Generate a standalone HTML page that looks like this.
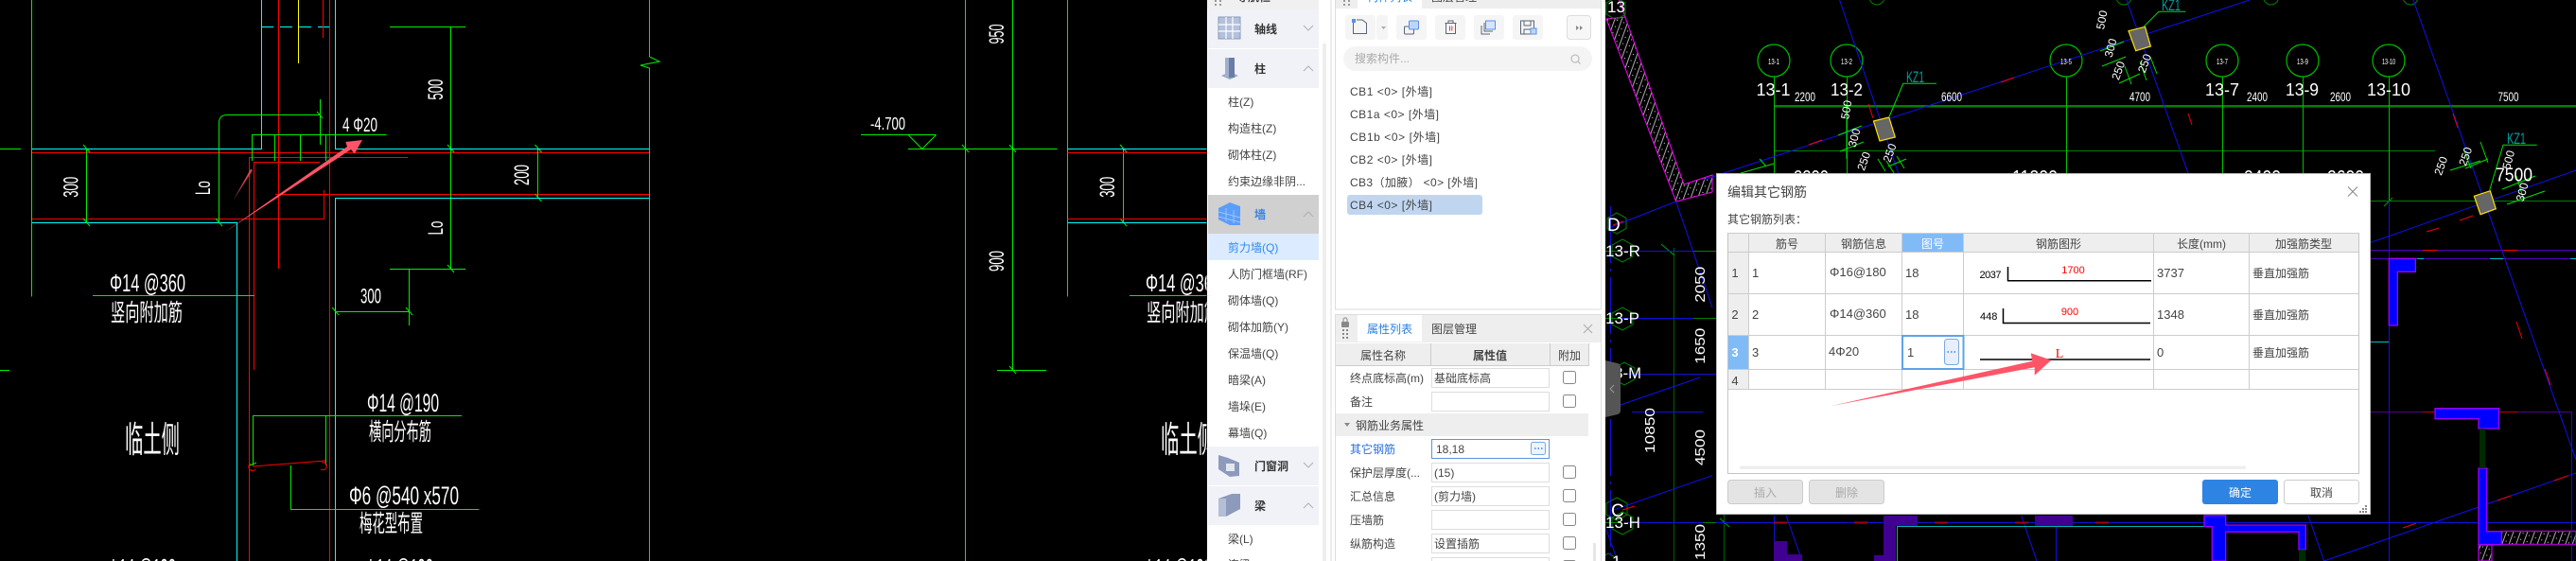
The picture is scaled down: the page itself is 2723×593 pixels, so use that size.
<!DOCTYPE html>
<html lang="zh"><head><meta charset="utf-8"><title>CAD</title>
<style>
html,body{margin:0;padding:0;background:#000;width:2723px;height:593px;overflow:hidden}
svg{display:block;font-family:"Liberation Sans","Noto Sans CJK SC",sans-serif;font-size:12px}
.l{fill:none;stroke-width:1;shape-rendering:crispEdges}
.d{fill:none;stroke-width:1}
.w text,text.w{fill:#fff}
.cj{font-family:"WenQuanYi Zen Hei","Noto Sans CJK SC",sans-serif}
.p text,text.p{fill:#444}
</style></head><body>
<svg width="2723" height="593" viewBox="0 0 2723 593" xmlns="http://www.w3.org/2000/svg">
<defs>
<clipPath id="c1"><rect x="0" y="0" width="1275.5" height="593"/></clipPath>
<clipPath id="c2"><rect x="1697" y="0" width="1026" height="593"/></clipPath>
<pattern id="h" width="7" height="7" patternUnits="userSpaceOnUse" patternTransform="rotate(20)"><rect width="7" height="7" fill="#000"/><path d="M1 0V7" stroke="#aaa" stroke-width="1"/><path d="M4 2V3" stroke="#ddd"/></pattern>
</defs>
<rect width="2723" height="593" fill="#000"/>

<!-- LEFT CAD -->
<path class="l" stroke="#00ffff" d="M276.5 0V157.5H33.5M354.5 0V157.5H686M33.5 235.5H250.5V593M354.5 593V209.5H686"/>
<path class="l" stroke="#00ffff" stroke-dasharray="13 7" d="M276 28.5H354"/>
<path class="l" stroke="#ff0000" d="M33.5 161.5H686M294.5 0V284M348.5 0V593M341.5 0V40M263.5 593V166.5H431M268.5 391V171.5H338M291 205.5H686M342.5 201V231.5H33.5"/>
<path class="l" stroke="#ffff00" d="M315.5 0V67"/>
<path class="l" stroke="#00ee00" d="M33.5 0V313.5M412 28.5H492M476.5 28V284.5M412 284.5H492M338.5 105V153M266.5 142.5H408.5M266.5 142V170M290.5 142V170M317.5 142V170M344.5 142V170M91.5 157V235M568.5 157V209M98 312.5H269M432.5 284V344M354 329.5H432M267 439.5H488M267.5 439V492M344.5 439V492M307.5 492V538.5H506M0 157.5H22M0 391.5H10M231.5 235V130M240 121.5H338"/>
<path class="d" stroke="#00ee00" d="M231.5 130Q231.5 121.5 240 121.5M88 153l7 8M88 231l7 8M228 231l7 8M473 153l7 8M473 280l7 8M565.5 153l7 8M565.5 205l7 8M351 325l7 8M429 325l7 8M335 118l6 7M264 492l7-3"/>
<path class="d" stroke="#ff0000" d="M267 493L344 487M265 490a4 4 0 1 0 5 6M340 489a4 4 0 1 1 -1 7"/>
<g class="w">
<text transform="translate(82.5,197.8) rotate(-90)" text-anchor="middle" font-size="22" textLength="22" lengthAdjust="spacingAndGlyphs">300</text>
<text transform="translate(222,198.6) rotate(-90)" text-anchor="middle" font-size="22" textLength="15" lengthAdjust="spacingAndGlyphs">Lo</text>
<text x="362" y="139" font-size="21" textLength="37" lengthAdjust="spacingAndGlyphs">4 Φ20</text>
<text transform="translate(468,94.6) rotate(-90)" text-anchor="middle" font-size="22" textLength="22" lengthAdjust="spacingAndGlyphs">500</text>
<text transform="translate(559,185) rotate(-90)" text-anchor="middle" font-size="22" textLength="22" lengthAdjust="spacingAndGlyphs">200</text>
<text transform="translate(468,241) rotate(-90)" text-anchor="middle" font-size="22" textLength="15" lengthAdjust="spacingAndGlyphs">Lo</text>
<text x="116" y="308" font-size="26" textLength="80" lengthAdjust="spacingAndGlyphs">Φ14 @360</text>
<text class="cj" x="117" y="339" font-size="25" textLength="76" lengthAdjust="spacingAndGlyphs">竖向附加筋</text>
<text x="381" y="320.7" font-size="22" textLength="22" lengthAdjust="spacingAndGlyphs">300</text>
<text x="388" y="435" font-size="27" textLength="76" lengthAdjust="spacingAndGlyphs">Φ14 @190</text>
<text class="cj" x="390" y="465" font-size="25" textLength="66" lengthAdjust="spacingAndGlyphs">横向分布筋</text>
<text class="cj" x="132" y="478" font-size="38" textLength="58" lengthAdjust="spacingAndGlyphs">临土侧</text>
<text x="369" y="533" font-size="27" textLength="116" lengthAdjust="spacingAndGlyphs">Φ6 @540 x570</text>
<text class="cj" x="380" y="562" font-size="25" textLength="67" lengthAdjust="spacingAndGlyphs">梅花型布置</text>
<text x="114" y="609" font-size="26" textLength="72" lengthAdjust="spacingAndGlyphs">Φ14 @190</text>
<text x="386" y="609" font-size="26" textLength="72" lengthAdjust="spacingAndGlyphs">Φ14 @190</text>
</g>

<!-- MIDDLE CAD -->
<path class="l" stroke="#00ee00" d="M686.5 0V60M686.5 72V593M1020.5 0V593M1070.5 0V391.5M1054 391.5H1106M1128.5 0V313.5M960 157.5H1117.5M910 142.5H989.5M1187.5 157V235"/>
<path class="d" stroke="#00ee00" d="M686.5 60L697 65L677 69L686.5 72M960 142.5L974.7 157.5L989.5 142.5M1017 153l7 8M1067 153l7 8M1067 387l7 8M1184 153l7 8M1184 231l7 8"/>
<path class="l" stroke="#00ffff" d="M0 0"/>
<path class="l" stroke="#00ffff" d="M354 157.5H686.5M354 209.5H686.5"/>
<g clip-path="url(#c1)">
<path class="l" stroke="#00ffff" d="M1128.5 157.5H1276M1128.5 235.5H1276"/>
<path class="l" stroke="#ff0000" d="M1128.5 161.5H1276M1128.5 231.5H1276"/>
<path class="l" stroke="#00ee00" d="M1194 312.5H1276"/>
<g class="w">
<text x="1211" y="308" font-size="26" textLength="80" lengthAdjust="spacingAndGlyphs">Φ14 @360</text>
<text class="cj" x="1212" y="339" font-size="25" textLength="76" lengthAdjust="spacingAndGlyphs">竖向附加筋</text>
<text class="cj" x="1227" y="478" font-size="38" textLength="58" lengthAdjust="spacingAndGlyphs">临土侧</text>
<text x="1209" y="609" font-size="26" textLength="72" lengthAdjust="spacingAndGlyphs">Φ14 @190</text>
</g></g>
<g class="w">
<text x="920" y="137" font-size="18" textLength="37" lengthAdjust="spacingAndGlyphs">-4.700</text>
<text transform="translate(1061,36) rotate(-90)" text-anchor="middle" font-size="22" textLength="21" lengthAdjust="spacingAndGlyphs">950</text>
<text transform="translate(1061,276) rotate(-90)" text-anchor="middle" font-size="22" textLength="22" lengthAdjust="spacingAndGlyphs">900</text>
<text transform="translate(1177.8,197.8) rotate(-90)" text-anchor="middle" font-size="22" textLength="22" lengthAdjust="spacingAndGlyphs">300</text>
</g>

<!-- RIGHT CAD -->
<g clip-path="url(#c2)">
<path d="M1698 20L1771.7 213L1810 203V185L1780 195L1718 18Z" fill="url(#h)" stroke="#ff00ff" stroke-width="1"/>
<path d="M1708 -10L1718 18" stroke="#ff00ff" fill="none"/>
<path d="M2644 561.5H2723V575.5H2644ZM2620 576H2634V593H2620Z" fill="url(#h)" stroke="#a000c0" stroke-width="1.5"/>
<!-- green grids -->
<path class="l" stroke="#008000" stroke-width="3" d="M1875 112H2723" style="stroke-width:2.5"/>
<path class="l" stroke="#008000" d="M1875 159.5H2574M2506 212.5H2723"/>
<path class="l" stroke="#00c000" d="M1875.5 81V184M1952.5 81V184M2184.5 81V184M2349.5 81V184M2434.5 81V184M2525.5 81V212"/>
<path class="l" stroke="#006000" d="M1769.5 262V593M1822.5 544V593"/>
<path class="d" stroke="#00a000" d="M1756 258l14 12M1818 548l10 9M2520 218l9-9"/>
<g fill="none" stroke="#00c000" stroke-width="1.2">
<circle cx="1875" cy="64" r="17"/><circle cx="1952" cy="64" r="17"/><circle cx="2184" cy="64" r="17"/><circle cx="2349" cy="64" r="17"/><circle cx="2434" cy="64" r="17"/><circle cx="2525" cy="64" r="17"/>
</g>
<g fill="none" stroke="#008000" stroke-width="1">
<circle cx="1984" cy="-3" r="8"/><circle cx="2245" cy="-3" r="8"/><circle cx="2400.6" cy="-3" r="8"/><circle cx="2548" cy="-3" r="8"/>
<path d="M1708 -3l10 6v12l-10 6l-10-6v-12zM1709 225l10 5.5v11l-10 5.5l-10-5.5v-11zM1715 253l11 6v12l-11 6l-11-6v-12zM1715 325l11 6v12l-11 6l-11-6v-12zM1717 383l11 6v12l-11 6l-11-6v-12zM1709 526l11 6v12l-11 6l-11-6v-12zM1715 541l11 6v12l-11 6l-11-6v-12zM1700 585l10 6v12l-10 6l-10-6v-12z"/>
</g>
<!-- blue lines -->
<g fill="none" stroke="#1010f0" stroke-width="1">
<path d="M1801 190L2378 0M1944.6 0L2006.6 183M2248 0L2313 183M2551 0L2723 486M2505 256.7L2723 180M1703 240L1771.7 213M1713 428L1797 399M1703 540L1810 502.7M2456.7 593L2723 500M2440 545L2456.7 593M1698 560L1710 593M1771.7 213L1810 325M1888 545L1905 593M2136.7 545L2153 593"/>
</g>
<g fill="none" stroke="#f00010" stroke-width="1">
<path d="M1912 153l14-5M2115 87l14-5M1975 110l5 15M2313 120l4 12M2593 120l5 15M2660 340l6 18M2690 390l6 17M2565 245l13-4M2600 233l14-5M2540 558l14-5M2640 529l14-5M2700 508l14-5M1705 238l11-4M1715 539l13-4"/>
</g>
<path class="l" stroke="#1010e0" d="M1713 265.5H1800M1713 336.5H1814M1720 395.5H1814M1725 435.5H1800M1720 552.5H1814M1814 552.5H2723M2173.5 545V593M1875.5 545V593M2525.5 212V593M2718.5 435V593"/>
<path class="l" stroke="#1010e0" stroke-dasharray="60 6 3 6" d="M1702.5 218V593"/>
<path class="l" stroke="#008000" d="M1697 265.5H1712M1790 265.5H1814M1697 336.5H1712M1790 336.5H1814M1697 552.5H1712M1800 552.5H1814"/>
<path class="l" stroke="#a00020" stroke-width="2" stroke-dasharray="14 71" d="M1875 552.5H2300" style="stroke-width:2"/>
<path class="l" stroke="#5000c0" d="M2506 264.5H2723M2506 273.5H2723"/>
<path class="l" stroke="#00c0c0" d="M2555 273.5H2562M2632 273.5H2646M2717 273.5H2723M2506 361.5H2525"/>
<path class="l" stroke="#ff0000" d="M2561 264.5H2576M2646 264.5H2661"/>
<path class="l" stroke="#500090" d="M2506 435.5H2574M2641 435.5H2718"/>
<path class="l" stroke="#c00000" d="M2561 435.5H2574M2641 435.5H2661"/>
<!-- purple blocks -->
<path fill="#400090" d="M1991 545H2027V556H2004V593H1981V586.7H1991ZM2151 545H2191V556H2151ZM1875 572H1889V586H1905V593H1875Z"/>
<path class="l" stroke="#00b0b0" d="M2005.5 593V556.5H2330"/>
<!-- blue shapes -->
<g fill="#0000ff" stroke="#a000ff" stroke-width="1.3">
<path d="M2525.3 273.3H2553.3V287.3H2534.3V344H2525.3Z"/>
<path d="M2574 431.7H2641.3V453H2620V442.7H2574Z"/>
<path d="M2620 495H2628.7V561.7H2644.3V575.7H2620Z"/>
<path d="M2330 545H2352.7V555H2437.3V581H2430V562.3H2352.7V593H2338.3V556.7H2330Z"/>
</g>
<rect x="2621" y="453" width="6" height="42" fill="#002a00"/>
<path d="M2430 581H2437V593H2430Z" fill="#002a00"/>
<!-- columns -->
<g fill="#666" stroke="#ffe000" stroke-width="1.2">
<path d="M1980.5 128L1996.8 124L2003.3 145L1987 149Z"/>
<path d="M2250 32.7L2267.5 28.3L2273.4 49L2257.7 53.7Z"/>
<path d="M2615.3 207.3L2632.3 201.7L2638.3 220.7L2622 226.7Z"/>
</g>
<!-- leaders + dim ticks -->
<g fill="none" stroke="#00dd00" stroke-width="1">
<path d="M1996.8 124L2011.8 88.3H2047M2266 28.3L2282 12.3H2310M2631.7 201L2646 153.3H2681.7"/>
<path d="M1943 143L1968 133M1945 160L1970 150M1952 168V110M1985 168L1993 181M1994 170L2002 183M2005 165L2013 178M1996 176L2015 168"/>
<path d="M2220 54L2245 44M2222 70L2247 60M2240 88L2262 78M2246 70L2253 89M2262 65L2269 85M2273 60L2280 78"/>
<path d="M2590 180L2622 170M2604 157L2612 178M2622 150L2630 172M2645 200L2680 186M2650 216L2690 202M2660 186L2668 212M2606 178L2630 168"/>
<path d="M1875 173L1840 183M1860 168l7 8"/>
</g>
<g fill="#fff" font-size="10" text-anchor="middle">
<text x="1875" y="68" font-size="8" textLength="12" lengthAdjust="spacingAndGlyphs">13-1</text>
<text x="1952" y="68" font-size="8" textLength="12" lengthAdjust="spacingAndGlyphs">13-2</text>
<text x="2184" y="68" font-size="8" textLength="12" lengthAdjust="spacingAndGlyphs">13-5</text>
<text x="2349" y="68" font-size="8" textLength="12" lengthAdjust="spacingAndGlyphs">13-7</text>
<text x="2434" y="68" font-size="8" textLength="12" lengthAdjust="spacingAndGlyphs">13-9</text>
<text x="2525" y="68" font-size="8" textLength="14" lengthAdjust="spacingAndGlyphs">13-10</text>
</g>
<g fill="#fff">
<text x="1699" y="13" font-size="17">13</text>
<text x="1704" y="599" font-size="17">1</text>
<text x="1856.5" y="101" font-size="18" textLength="36" lengthAdjust="spacingAndGlyphs">13-1</text>
<text x="1935" y="101" font-size="18" textLength="34" lengthAdjust="spacingAndGlyphs">13-2</text>
<text x="2331" y="101" font-size="18" textLength="36" lengthAdjust="spacingAndGlyphs">13-7</text>
<text x="2416" y="101" font-size="18" textLength="35" lengthAdjust="spacingAndGlyphs">13-9</text>
<text x="2502" y="101" font-size="18" textLength="46" lengthAdjust="spacingAndGlyphs">13-10</text>
<g font-size="14">
<text x="1897" y="107" textLength="22" lengthAdjust="spacingAndGlyphs">2200</text>
<text x="2052" y="107" textLength="22" lengthAdjust="spacingAndGlyphs">6600</text>
<text x="2251" y="107" textLength="22" lengthAdjust="spacingAndGlyphs">4700</text>
<text x="2375" y="107" textLength="22" lengthAdjust="spacingAndGlyphs">2400</text>
<text x="2463" y="107" textLength="22" lengthAdjust="spacingAndGlyphs">2600</text>
<text x="2640.5" y="107" textLength="22" lengthAdjust="spacingAndGlyphs">7500</text>
</g>
<g font-size="20">
<text x="1896" y="194" textLength="37" lengthAdjust="spacingAndGlyphs">2200</text>
<text x="2127" y="194" textLength="48" lengthAdjust="spacingAndGlyphs">11200</text>
<text x="2372" y="194" textLength="39" lengthAdjust="spacingAndGlyphs">2400</text>
<text x="2460" y="194" textLength="39" lengthAdjust="spacingAndGlyphs">2600</text>
</g>
<text x="2638" y="191.7" font-size="20" textLength="39" lengthAdjust="spacingAndGlyphs">7500</text>
<g font-size="12" text-anchor="middle">
<text transform="translate(1955.7,116.7) rotate(-80)">500</text>
<text transform="translate(1964,146.7) rotate(-75)">300</text>
<text transform="translate(1974,171.7) rotate(-70)">250</text>
<text transform="translate(2001.4,163) rotate(-70)">250</text>
<text transform="translate(2225.8,21.7) rotate(-80)">500</text>
<text transform="translate(2235,51.7) rotate(-75)">300</text>
<text transform="translate(2243,76) rotate(-70)">250</text>
<text transform="translate(2270.8,68.3) rotate(-70)">250</text>
<text transform="translate(2584,176.7) rotate(-70)">250</text>
<text transform="translate(2610,166.7) rotate(-70)">250</text>
<text transform="translate(2655.6,170) rotate(-75)">500</text>
<text transform="translate(2670,204) rotate(-75)">300</text>
</g>
<text x="1699" y="244" font-size="19">D</text>
<text x="1703" y="546" font-size="19">C</text>
<text x="1697" y="271" font-size="17" textLength="37" lengthAdjust="spacingAndGlyphs">13-R</text>
<text x="1697" y="342" font-size="17" textLength="36" lengthAdjust="spacingAndGlyphs">13-P</text>
<text x="1697" y="400" font-size="17" textLength="38" lengthAdjust="spacingAndGlyphs">13-M</text>
<text x="1697" y="558" font-size="17" textLength="37" lengthAdjust="spacingAndGlyphs">13-H</text>
<g font-size="15" text-anchor="middle">
<text transform="translate(1802,300.7) rotate(-90)" textLength="38" lengthAdjust="spacingAndGlyphs">2050</text>
<text transform="translate(1802,365.7) rotate(-90)" textLength="38" lengthAdjust="spacingAndGlyphs">1650</text>
<text transform="translate(1802,473) rotate(-90)" textLength="38" lengthAdjust="spacingAndGlyphs">4500</text>
<text transform="translate(1802,573) rotate(-90)" textLength="38" lengthAdjust="spacingAndGlyphs">1350</text>
<text transform="translate(1749,455) rotate(-90)" textLength="48" lengthAdjust="spacingAndGlyphs">10850</text>
</g>
</g>
<g fill="#00a0a0" font-size="17">
<text x="2015" y="87" textLength="19" lengthAdjust="spacingAndGlyphs">KZ1</text>
<text x="2285" y="11" textLength="20" lengthAdjust="spacingAndGlyphs">KZ1</text>
<text x="2650" y="152" textLength="20" lengthAdjust="spacingAndGlyphs">KZ1</text>
</g>
</g>

<!-- PANEL -->
<rect x="1276" y="0" width="421" height="593" fill="#fff"/>
<rect x="1276" y="0" width="118" height="10" fill="#f0f0f0"/>
<rect x="1398" y="46" width="4" height="547" fill="#eee"/>
<rect x="1406.5" y="0" width="1" height="593" fill="#ddd"/>
<rect x="1411.5" y="-2" width="281" height="329" fill="#fff" stroke="#ddd"/>
<rect x="1412" y="0" width="280" height="9" fill="#eee"/>
<rect x="1435" y="0" width="68" height="9" fill="#fff"/>
<text x="1307" y="1" font-weight="bold" fill="#444" font-size="12">导航栏</text>
<text x="1445" y="1" fill="#2b7fe0">构件列表</text>
<text x="1513" y="1" fill="#444">图层管理</text>
<g fill="#999"><rect x="1284" y="0" width="2" height="2"/><rect x="1289" y="0" width="2" height="2"/><rect x="1284" y="4" width="2" height="2"/><rect x="1289" y="4" width="2" height="2"/><rect x="1420" y="0" width="2" height="2"/><rect x="1425" y="0" width="2" height="2"/><rect x="1420" y="4" width="2" height="2"/><rect x="1425" y="4" width="2" height="2"/></g>

<!-- nav -->
<rect x="1277" y="10" width="117" height="41" fill="#f0f2f7"/>
<rect x="1277" y="52" width="117" height="41" fill="#f0f2f7"/>
<rect x="1277" y="206" width="117" height="41" fill="#d0d0d0"/>
<rect x="1277" y="247" width="117" height="28" fill="#dcebff"/>
<rect x="1277" y="472" width="117" height="41" fill="#f0f2f7"/>
<rect x="1277" y="514" width="117" height="41" fill="#f0f2f7"/>
<!-- nav icons -->
<rect x="1288" y="18" width="23" height="23" fill="#b4c0dc" stroke="#8a9aba"/>
<path d="M1296 18V41M1303 18V41M1288 26H1311M1288 33H1311" stroke="#fff" stroke-width="1.2"/>
<path d="M1291 80L1300 84L1309 80L1300 76Z" fill="#9aa6bf"/><rect x="1295" y="61" width="10" height="21" fill="#6a7da6"/><rect x="1295" y="61" width="4" height="21" fill="#9fb0cf"/>
<path d="M1288 220L1300 214L1311 218V238L1300 238L1288 232Z" fill="#5b9dfa"/><path d="M1288 224L1311 230M1288 229L1311 235M1296 220V234M1304 222V236" stroke="#a8ccff" stroke-width=".8"/>
<path d="M1288 481L1298 484L1310 489V503L1300 504L1288 496Z" fill="#8d9abb"/><rect x="1296" y="490" width="9" height="8" fill="#e3e7f0"/>
<path d="M1288 527L1302 522L1311 522V538L1296 546H1288Z" fill="#8d9abb"/><path d="M1288 527H1296V546H1288Z" fill="#b4bed4"/>
<!-- chevrons -->
<g fill="none" stroke="#b0b0b8" stroke-width="1"><path d="M1378 27l5 5l5-5M1378 75l5-5l5 5M1378 229l5-5l5 5M1378 489l5 5l5-5M1378 537l5-5l5 5"/></g>
<g font-weight="bold" fill="#333">
<text x="1326" y="35">轴线</text><text x="1326" y="77">柱</text><text x="1326" y="231" fill="#3b82e0">墙</text><text x="1326" y="497">门窗洞</text><text x="1326" y="539">梁</text>
</g>
<g class="p">
<text x="1298" y="112">柱(Z)</text><text x="1298" y="140">构造柱(Z)</text><text x="1298" y="168">砌体柱(Z)</text><text x="1298" y="196">约束边缘非阴...</text>
<text x="1298" y="266" style="fill:#2b8cf0">剪力墙(Q)</text><text x="1298" y="294">人防门框墙(RF)</text><text x="1298" y="322">砌体墙(Q)</text><text x="1298" y="350">砌体加筋(Y)</text><text x="1298" y="378">保温墙(Q)</text><text x="1298" y="406">暗梁(A)</text><text x="1298" y="434">墙垛(E)</text><text x="1298" y="462">幕墙(Q)</text><text x="1298" y="574">梁(L)</text><text x="1298" y="601">连梁</text>
</g>

<!-- toolbar -->
<g fill="#f5f5f5"><rect x="1422" y="16" width="32" height="26" rx="3"/><rect x="1455" y="16" width="12" height="26" rx="3"/><rect x="1476" y="16" width="32" height="26" rx="3"/><rect x="1517" y="16" width="32" height="26" rx="3"/><rect x="1558" y="16" width="32" height="26" rx="3"/><rect x="1599" y="16" width="32" height="26" rx="3"/></g>
<rect x="1656.5" y="16.5" width="25" height="25" rx="3" fill="#f7f7f7" stroke="#ddd"/>
<path d="M1460 28h5l-2.500 3z" fill="#aaa"/>
<g fill="none" stroke="#5a6578" stroke-width="1">
<path d="M1430.500 24V35.500H1444.500V24.500L1440 21H1434"/>
<rect x="1484.500" y="28" width="10" height="8" rx="1"/>
<path d="M1527.500 24.500H1539.500M1531 24.500V22H1536V24.500M1528.500 24.500V35.500H1538.500V24.500"/>
<path d="M1566 27V36H1575M1569 24V33H1578"/>
<rect x="1607.500" y="22" width="14" height="14"/><path d="M1611 22V27H1618V22M1611 36V31H1618"/>
</g>
<rect x="1429" y="20" width="4" height="4" fill="#5b8fe8"/>
<rect x="1489.500" y="22" width="10" height="9" rx="1" fill="#bcd6f8" stroke="#5b8fe8"/>
<path d="M1532.500 27.500V32.500M1534.800 27.500V32.500" stroke="#e33"/>
<rect x="1570.500" y="22" width="10" height="9" fill="#d5e6fc" stroke="#5b8fe8"/>
<rect x="1618" y="30" width="6" height="6" fill="#bcd6f8" stroke="#5b8fe8"/>
<path d="M1666 27v5l3-2.500zM1670 27v5l3-2.500z" fill="#888"/>
<rect x="1420" y="49" width="263" height="26" rx="13" fill="#f4f4f4"/>
<text x="1432" y="66" fill="#aaa">搜索构件...</text>
<circle cx="1665" cy="62" r="4" fill="none" stroke="#c0c0c0" stroke-width="1.3"/><path d="M1668 65l2.500 2.500" stroke="#c0c0c0" stroke-width="1.3"/>
<rect x="1424" y="206" width="143" height="21" rx="3" fill="#c0d6f0"/>
<g class="p" xml:space="preserve" style="white-space:pre">
<text x="1427" y="101" textLength="87">CB1  &lt;0&gt;  [外墙]</text>
<text x="1427" y="125" textLength="94">CB1a  &lt;0&gt;  [外墙]</text>
<text x="1427" y="149" textLength="95">CB1b  &lt;0&gt;  [外墙]</text>
<text x="1427" y="173" textLength="87">CB2  &lt;0&gt;  [外墙]</text>
<text x="1427" y="197" textLength="135">CB3（加腋） &lt;0&gt;  [外墙]</text>
<text x="1427" y="221" textLength="87">CB4  &lt;0&gt;  [外墙]</text>
</g>

<!-- properties -->
<rect x="1411.500" y="332.500" width="281" height="262" fill="#fff" stroke="#ddd"/>
<rect x="1412" y="333" width="280" height="29" fill="#eee"/>
<rect x="1435" y="333" width="68" height="28" fill="#fff"/>
<text x="1445" y="352" fill="#2b7fe0">属性列表</text>
<text x="1513" y="352" fill="#444">图层管理</text>
<path d="M1674 343l9 9m0-9l-9 9" stroke="#aaa" fill="none"/>
<rect x="1418" y="340" width="8" height="6" fill="#888" rx="1"/><path d="M1420 340v-2a2 2 0 0 1 4 0v2" fill="none" stroke="#888"/>
<g fill="#888"><rect x="1419" y="348" width="2" height="2"/><rect x="1423" y="348" width="2" height="2"/><rect x="1419" y="352" width="2" height="2"/><rect x="1423" y="352" width="2" height="2"/><rect x="1419" y="356" width="2" height="2"/><rect x="1423" y="356" width="2" height="2"/></g>
<rect x="1412" y="363" width="268" height="24" fill="#eee"/>
<path class="l" stroke="#ccc" d="M1512.500 363V387M1638.500 363V387M1679.500 363V387M1412 386.500H1680"/>
<g class="p" text-anchor="middle"><text x="1462" y="380">属性名称</text><text x="1575" y="380" font-weight="bold">属性值</text><text x="1659" y="380">附加</text></g>
<rect x="1412" y="437" width="267" height="24" fill="#eee"/>
<path d="M1421 447h6l-3 4z" fill="#888"/>
<g fill="#fff" stroke="#ddd"><rect x="1513.500" y="389.500" width="124" height="20"/><rect x="1513.500" y="414.500" width="124" height="20"/><rect x="1513.500" y="489.500" width="124" height="20"/><rect x="1513.500" y="514.500" width="124" height="20"/><rect x="1513.500" y="539.500" width="124" height="20"/><rect x="1513.500" y="564.500" width="124" height="20"/><rect x="1513.500" y="589.500" width="124" height="20"/></g>
<rect x="1513.500" y="464.500" width="124" height="20" fill="#fff" stroke="#5c93e0"/>
<rect x="1618.500" y="467.500" width="15" height="13" rx="2" fill="#eef4fc" stroke="#7aa8e0"/>
<path d="M1622 474h1.500M1625.500 474h1.500M1629 474h1.500" stroke="#3b82e0" stroke-width="1.500"/>
<g fill="#fff" stroke="#888"><rect x="1652.500" y="392.500" width="13" height="13" rx="2"/><rect x="1652.500" y="417.500" width="13" height="13" rx="2"/><rect x="1652.500" y="492.500" width="13" height="13" rx="2"/><rect x="1652.500" y="517.500" width="13" height="13" rx="2"/><rect x="1652.500" y="542.500" width="13" height="13" rx="2"/><rect x="1652.500" y="567.500" width="13" height="13" rx="2"/><rect x="1652.500" y="592.500" width="13" height="13" rx="2"/></g>
<g class="p">
<text x="1427" y="404">终点底标高(m)</text><text x="1516" y="404">基础底标高</text>
<text x="1427" y="429">备注</text>
<text x="1433" y="454">钢筋业务属性</text>
<text x="1427" y="479" style="fill:#2b6fe0">其它钢筋</text><text x="1518" y="479">18,18</text>
<text x="1427" y="504">保护层厚度(...</text><text x="1516" y="504">(15)</text>
<text x="1427" y="529">汇总信息</text><text x="1516" y="529">(剪力墙)</text>
<text x="1427" y="554">压墙筋</text>
<text x="1427" y="579">纵筋构造</text><text x="1516" y="579">设置插筋</text>
</g>
<rect x="1684" y="574" width="3" height="19" fill="#e6e6e6"/>

<!-- collapse tab -->
<path d="M1697 381L1710 384Q1713 385 1713 388V434Q1713 437 1710 438L1697 441Z" fill="#555"/>
<path d="M1706 407l-4 4l4 4" fill="none" stroke="#999"/>

<!-- DIALOG -->
<rect x="1814.500" y="183.500" width="691" height="360" fill="#fff" stroke="#bbb"/>
<text class="p" x="1826" y="208" font-size="14">编辑其它钢筋</text>
<text class="p" x="1826" y="236">其它钢筋列表：</text>
<path d="M2482 197.500l10 10m0-10l-10 10" stroke="#888" fill="none"/>
<rect x="1826.500" y="246.500" width="667" height="20" fill="#eee"/>
<rect x="1827" y="267" width="22" height="87" fill="#eee"/><rect x="1827" y="391" width="22" height="20" fill="#eee"/>
<rect x="2010" y="247" width="66" height="20" fill="#80bbf8"/>
<rect x="1827" y="354" width="22" height="36" fill="#80bbf8"/>
<path class="l" stroke="#ccc" d="M1826.500 246.500H2493.500M1826.500 266.500H2493.500M1826.500 310.500H2493.500M1826.500 354.500H2493.500M1826.500 390.500H2493.500M1826.500 411.500H2493.500M1848.500 246V411M1929.500 246V411M2010.500 246V411M2075.500 246V411M2276.500 246V411M2377.500 246V411"/>
<path class="l" stroke="#c4c4c4" d="M1826.500 246V500.500H2493.500V246"/>
<rect x="2011" y="355" width="64.500" height="35" fill="#fff" stroke="#5ea3ea" stroke-width="2"/>
<rect x="2055.500" y="358.500" width="15" height="27" rx="3" fill="#e8effa" stroke="#7aa8e0"/>
<path d="M2058.500 372h1.500M2062 372h1.500M2065.500 372h1.500" stroke="#3b82e0" stroke-width="1.500"/>
<g class="p" text-anchor="middle"><text x="1889" y="262">筋号</text><text x="1970" y="262">钢筋信息</text><text x="2176" y="262">钢筋图形</text><text x="2327" y="262">长度(mm)</text><text x="2435" y="262">加强筋类型</text></g>
<text x="2043" y="262" text-anchor="middle" fill="#fff">图号</text>
<g class="p" font-size="13">
<text x="1834" y="293" text-anchor="middle">1</text><text x="1834" y="337" text-anchor="middle">2</text><text x="1834" y="407" text-anchor="middle">4</text>
<text x="1852" y="293">1</text><text x="1852" y="337">2</text><text x="1852" y="377">3</text>
<text x="1934" y="292">Φ16@180</text><text x="1934" y="336">Φ14@360</text><text x="1933" y="376">4Φ20</text>
<text x="2014" y="293">18</text><text x="2014" y="337">18</text><text x="2016" y="377">1</text>
<text x="2280" y="293">3737</text><text x="2280" y="337">1348</text><text x="2280" y="377">0</text>
</g>
<text x="1834" y="377" text-anchor="middle" fill="#fff" font-size="13" font-weight="bold">3</text>
<g class="p"><text x="2381" y="293">垂直加强筋</text><text x="2381" y="337">垂直加强筋</text><text x="2381" y="377">垂直加强筋</text></g>
<path d="M2122.500 282V296.800H2274M2117.500 326V341.500H2273M2093 380H2273" fill="none" stroke="#000" stroke-width="1.500"/>
<g fill="#000" font-size="11"><text x="2092.500" y="294" textLength="23">2037</text><text x="2093" y="338">448</text></g>
<g fill="#f00" font-size="11" text-anchor="middle"><text x="2191.500" y="289">1700</text><text x="2188" y="333">900</text></g>
<text x="2177" y="378" fill="#f00" font-size="14" text-anchor="middle" font-family="Liberation Serif">L</text>
<rect x="1839" y="492.500" width="535" height="3.500" rx="1.700" fill="#eee"/>
<rect x="1826.500" y="507.500" width="79" height="25" rx="3" fill="#e4e4e4" stroke="#ccc"/>
<rect x="1912.500" y="507.500" width="79" height="25" rx="3" fill="#e4e4e4" stroke="#ccc"/>
<rect x="2328" y="507" width="80" height="26" rx="3" fill="#2d84e3"/>
<rect x="2414.500" y="507.500" width="79" height="25" rx="3" fill="#fff" stroke="#ccc"/>
<g text-anchor="middle"><text x="1866" y="525" fill="#aaa">插入</text><text x="1952" y="525" fill="#aaa">删除</text><text x="2368" y="525" fill="#fff">确定</text><text x="2454" y="525" fill="#444">取消</text></g>
<g fill="#888"><rect x="2500" y="534" width="2" height="2"/><rect x="2497" y="537" width="2" height="2"/><rect x="2500" y="537" width="2" height="2"/><rect x="2494" y="540" width="2" height="2"/><rect x="2497" y="540" width="2" height="2"/><rect x="2500" y="540" width="2" height="2"/></g>

<!-- ARROWS -->
<g fill="#ff5468">
<path d="M237 245.800L367 155L365.300 150L383 148L374.700 162.600L371 158Z"/>
<path d="M246.500 211.800L265 178.500L267 180Z" opacity=".8"/>
<path d="M1935 429.300L2148.300 381.700L2146.700 373.300L2168.300 380.700L2150.700 396.700L2150.700 388.300Z"/>
</g>
</svg>
</body></html>
